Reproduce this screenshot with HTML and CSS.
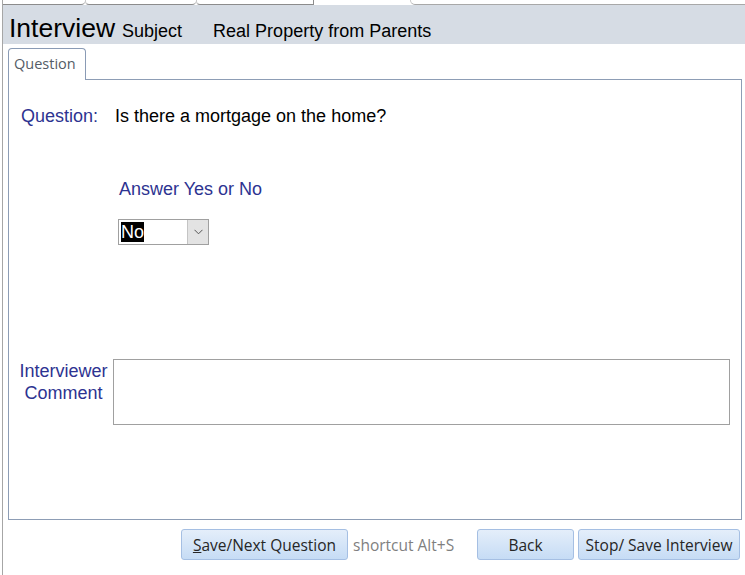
FILE: index.html
```html
<!DOCTYPE html>
<html>
<head>
<meta charset="utf-8">
<link rel="stylesheet" href="styles.css">
</head>
<body>
<div class="app">
  <div class="toptabs">
    <div class="seg seg-a"></div>
    <div class="seg seg-b"></div>
    <div class="seg seg-c"></div>
    <div class="seg-active"></div>
    <div class="seg seg-d"></div>
  </div>
  <div class="header">
    <span class="title">Interview</span>
    <span class="subject">Subject</span>
    <span class="subject-val">Real Property from Parents</span>
  </div>
  <div class="tabstrip">
    <div class="tab">Question</div>
  </div>
  <div class="panel">
    <div class="q-row">
      <span class="lbl q-lbl">Question:</span>
      <span class="q-text">Is there a mortgage on the home?</span>
    </div>
    <div class="lbl answer-lbl">Answer Yes or No</div>
    <div class="select">
      <span class="sel-val">No</span>
      <span class="sel-btn">
        <svg width="9" height="6" viewBox="0 0 9 6"><path d="M0.5 0.8 L4.5 4.8 L8.5 0.8" fill="none" stroke="#555" stroke-width="1"/></svg>
      </span>
    </div>
    <div class="comment-row">
      <div class="lbl comment-lbl">Interviewer<br>Comment</div>
      <div class="comment-box"></div>
    </div>
  </div>
  <div class="buttons">
    <div class="btn btn-save"><span class="ul">S</span>ave/Next Question</div>
    <span class="shortcut">shortcut Alt+S</span>
    <div class="btn btn-back">Back</div>
    <div class="btn btn-stop">Stop/ Save Interview</div>
  </div>
</div>
</body>
</html>
```

FILE: styles.css
```css
html, body {
  margin: 0;
  padding: 0;
  background: #ffffff;
}
body {
  width: 745px;
  height: 575px;
  overflow: hidden;
  font-family: "Liberation Sans", Arial, sans-serif;
}
.app {
  margin-left: 2px;
  border-left: 1px solid #a6a6a6;
  height: 575px;
  display: flex;
  flex-direction: column;
}
.toptabs {
  height: 5px;
  display: flex;
  flex: none;
}
.seg {
  height: 4px;
  border-bottom: 1px solid #8c8c8c;
}
.seg-a { width: 82px; border-bottom-right-radius: 4px; }
.seg-b { width: 110px; border-bottom-left-radius: 4px; border-bottom-right-radius: 4px; border-left: 1px solid #c8c8c8; }
.seg-c { width: 116px; border-right: 1px solid #8c8c8c; border-left: 1px solid #c8c8c8; border-bottom-left-radius: 4px; }
.seg-active { width: 96px; background: #fff; }
.seg-d { flex: 1; border-bottom-color: #a8a8a8; border-left: 1px solid #c8c8c8; border-bottom-left-radius: 5px; }
.header {
  height: 39px;
  box-sizing: border-box;
  background: #d6dce4;
  display: flex;
  align-items: baseline;
  padding: 8px 0 0 6px;
  color: #000;
  flex: none;
}
.title {
  font-size: 26.5px;
  line-height: 30px;
}
.subject {
  font-size: 18px;
  margin-left: 7px;
}
.subject-val {
  font-size: 18px;
  margin-left: 31px;
}
.tabstrip {
  height: 35px;
  box-sizing: border-box;
  padding: 4px 0 0 5px;
  display: flex;
  align-items: flex-start;
  flex: none;
}
.tab {
  position: relative;
  z-index: 1;
  width: 78px;
  height: 32px;
  box-sizing: border-box;
  border: 1px solid #8a9bb5;
  border-bottom: none;
  border-radius: 4px 4px 0 0;
  background: #fff;
  font-family: "Open Sans", sans-serif;
  font-size: 14.5px;
  color: #555c66;
  padding: 5px 0 0 5px;
  line-height: 20px;
}
.panel {
  margin: 0 3px 0 5px;
  height: 441px;
  box-sizing: border-box;
  border: 1px solid #8d9db5;
  padding: 25px 0 0 12px;
  flex: none;
}
.lbl {
  color: #2d3391;
  font-size: 18px;
  line-height: 22px;
}
.q-row {
  display: flex;
  font-size: 18px;
  line-height: 22px;
}
.q-lbl {
  width: 94px;
  flex: none;
}
.q-text {
  color: #000;
}
.answer-lbl {
  margin: 51px 0 0 98px;
}
.select {
  margin: 19px 0 0 97px;
  width: 91px;
  height: 26px;
  box-sizing: border-box;
  border: 1px solid #a0a0a0;
  display: flex;
  align-items: stretch;
}
.sel-val {
  margin: 2px 0 2px 2px;
  background: #000;
  color: #fff;
  font-size: 18px;
  line-height: 20px;
  padding: 0 1px 0 0;
  height: 20px;
  width: 22px;
}
.sel-btn {
  margin-left: auto;
  width: 20px;
  background: #e3e3e3;
  border-left: 1px solid #c4c4c4;
  display: flex;
  align-items: center;
  justify-content: center;
}
.comment-row {
  display: flex;
  margin: 114px 0 0 -3px;
}
.comment-lbl {
  width: 91px;
  text-align: center;
  padding-top: 1px;
}
.comment-box {
  margin-left: 4px;
  width: 617px;
  height: 66px;
  box-sizing: border-box;
  border: 1px solid #a0a0a0;
}
.buttons {
  display: flex;
  justify-content: flex-end;
  align-items: center;
  margin-top: 9px;
  padding-right: 5px;
  font-family: "Open Sans", sans-serif;
  font-size: 15.5px;
}
.btn {
  height: 31px;
  box-sizing: border-box;
  border: 1px solid #a5bfe3;
  border-radius: 3px;
  background: linear-gradient(#e4eefa, #c6dcf5);
  color: #262626;
  display: flex;
  align-items: center;
  justify-content: center;
  white-space: nowrap;
}
.ul { text-decoration: underline; }
.btn-save { width: 167px; }
.shortcut {
  color: #7f7f7f;
  margin: 0 21px 0 5px;
  width: 103px;
  white-space: nowrap;
}
.btn-back { width: 97px; margin-right: 4px; }
.btn-stop { width: 162px; }
```
